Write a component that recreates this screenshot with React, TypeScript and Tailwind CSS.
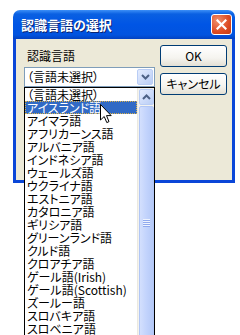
import React from 'react';

const items = [
  '（言語未選択）',
  'アイスランド語',
  'アイマラ語',
  'アフリカーンス語',
  'アルバニア語',
  'インドネシア語',
  'ウェールズ語',
  'ウクライナ語',
  'エストニア語',
  'カタロニア語',
  'ギリシア語',
  'グリーンランド語',
  'クルド語',
  'クロアチア語',
  'ゲール語(Irish)',
  'ゲール語(Scottish)',
  'ズールー語',
  'スロバキア語',
  'スロベニア語',
  'セルビア語',
];

const Chevron = ({ up }: { up?: boolean }) => (
  <svg width="9" height="6" viewBox="0 0 9 6">
    <path
      d={up ? 'M1 5 L4.5 1.5 L8 5' : 'M1 1 L4.5 4.5 L8 1'}
      stroke="#4d6185"
      strokeWidth="2"
      fill="none"
    />
  </svg>
);

const XpButton = ({ label }: { label: string }) => (
  <div className="w-[67px] h-[22px] rounded-[3px] border border-[#003c74] bg-[linear-gradient(to_bottom,#ffffff_0%,#f5f4ef_60%,#e3e0d4_100%)] flex items-center justify-center leading-none text-black">
    {label}
  </div>
);

export default function App() {
  return (
    <div className="relative w-[240px] h-[335px] overflow-hidden bg-white pt-[10px] pl-[13px] text-[12px] [font-family:'Noto_Sans_CJK_JP',sans-serif] [font-feature-settings:'palt']">
      {/* Window */}
      <div className="w-[222px] h-[173px] flex flex-col">
        {/* Title bar */}
        <div className="h-[29px] rounded-t-[7px] bg-[linear-gradient(to_bottom,#3d8ff7_0%,#0a60e2_14%,#0055e5_50%,#0153df_86%,#0341c0_100%)] flex items-center justify-between pl-[8px] pr-[3px]">
          <span className="text-white font-bold text-[13px] leading-none [text-shadow:1px_1px_0_#0a2470]">
            認識言語の選択
          </span>
          <div className="w-[21px] h-[21px] rounded-[3px] border border-white bg-[radial-gradient(circle_at_30%_30%,#f0906c,#dd4a22_60%,#c23a16)] flex items-center justify-center">
            <svg width="11" height="11" viewBox="0 0 11 11">
              <path d="M1.5 1.5 L9.5 9.5 M9.5 1.5 L1.5 9.5" stroke="white" strokeWidth="2.2" strokeLinecap="square" />
            </svg>
          </div>
        </div>

        {/* Body */}
        <div className="flex-1 flex bg-[#ece9d8] border-x-[3px] border-b-[3px] border-[#0a46d8] pl-[8px] pt-[6px]">
          <div className="w-[131px] flex flex-col">
            <div className="mt-[4px] h-[14px] leading-[14px] pl-[3px] text-black">認識言語</div>
            <div className="mt-[4px] h-[20px] bg-white border border-[#7f9db9] flex items-center justify-between pl-[2px] pr-[1px]">
              <span className="leading-none text-black">（言語未選択）</span>
              <div className="w-[16px] h-[16px] rounded-[2px] border border-[#b9cdf5] bg-[linear-gradient(to_bottom_right,#e4ecfe,#b9cdf6)] flex items-center justify-center">
                <Chevron />
              </div>
            </div>
          </div>
          <div className="ml-[5px] flex flex-col gap-[6px]">
            <XpButton label="OK" />
            <XpButton label="キャンセル" />
          </div>
        </div>
      </div>

      {/* Dropdown list */}
      <div className="absolute left-[24px] top-[87px] w-[131px] h-[260px] border border-black bg-white flex">
        <div className="flex-1 flex flex-col">
          {items.map((it, i) => (
            <div
              key={it}
              className={
                i === 1
                  ? 'h-[13px] leading-[13px] pl-[2px] whitespace-nowrap bg-[#316ac5] text-white outline-1 outline-dotted outline-[#d9b04a] -outline-offset-1'
                  : 'h-[13px] leading-[13px] pl-[2px] whitespace-nowrap text-black'
              }
            >
              {it}
            </div>
          ))}
        </div>
        <div className="w-[17px] bg-[#f4f3ee] border-l border-[#ebe9e0] flex flex-col pt-[1px] pl-[1px]">
          <div className="w-[15px] h-[16px] rounded-[2px] border border-[#b9cdf5] bg-[linear-gradient(to_bottom_right,#e4ecfe,#b9cdf6)] flex items-center justify-center">
            <Chevron up />
          </div>
          <div className="mt-[1px] w-[15px] h-[234px] rounded-[2px] border border-[#b1c6f5] bg-[linear-gradient(to_right,#d3dffd,#c2d3fc_50%,#b5c9f7)] flex items-center justify-center">
            <svg width="7" height="8" viewBox="0 0 7 8">
              <path d="M0 0.5 H7 M0 2.5 H7 M0 4.5 H7 M0 6.5 H7" stroke="#eef3fe" strokeWidth="1" />
              <path d="M0 1.5 H7 M0 3.5 H7 M0 5.5 H7 M0 7.5 H7" stroke="#90a9ee" strokeWidth="1" />
            </svg>
          </div>
        </div>
      </div>

      {/* Mouse cursor */}
      <svg className="absolute left-[100px] top-[104px]" width="12" height="20" viewBox="0 0 12 20">
        <path d="M0.5 0.5 L0.5 16 L4.2 12.5 L6.8 18.6 L9 17.6 L6.5 11.6 L11.2 11.6 Z" fill="white" stroke="black" strokeWidth="1" />
      </svg>
    </div>
  );
}
